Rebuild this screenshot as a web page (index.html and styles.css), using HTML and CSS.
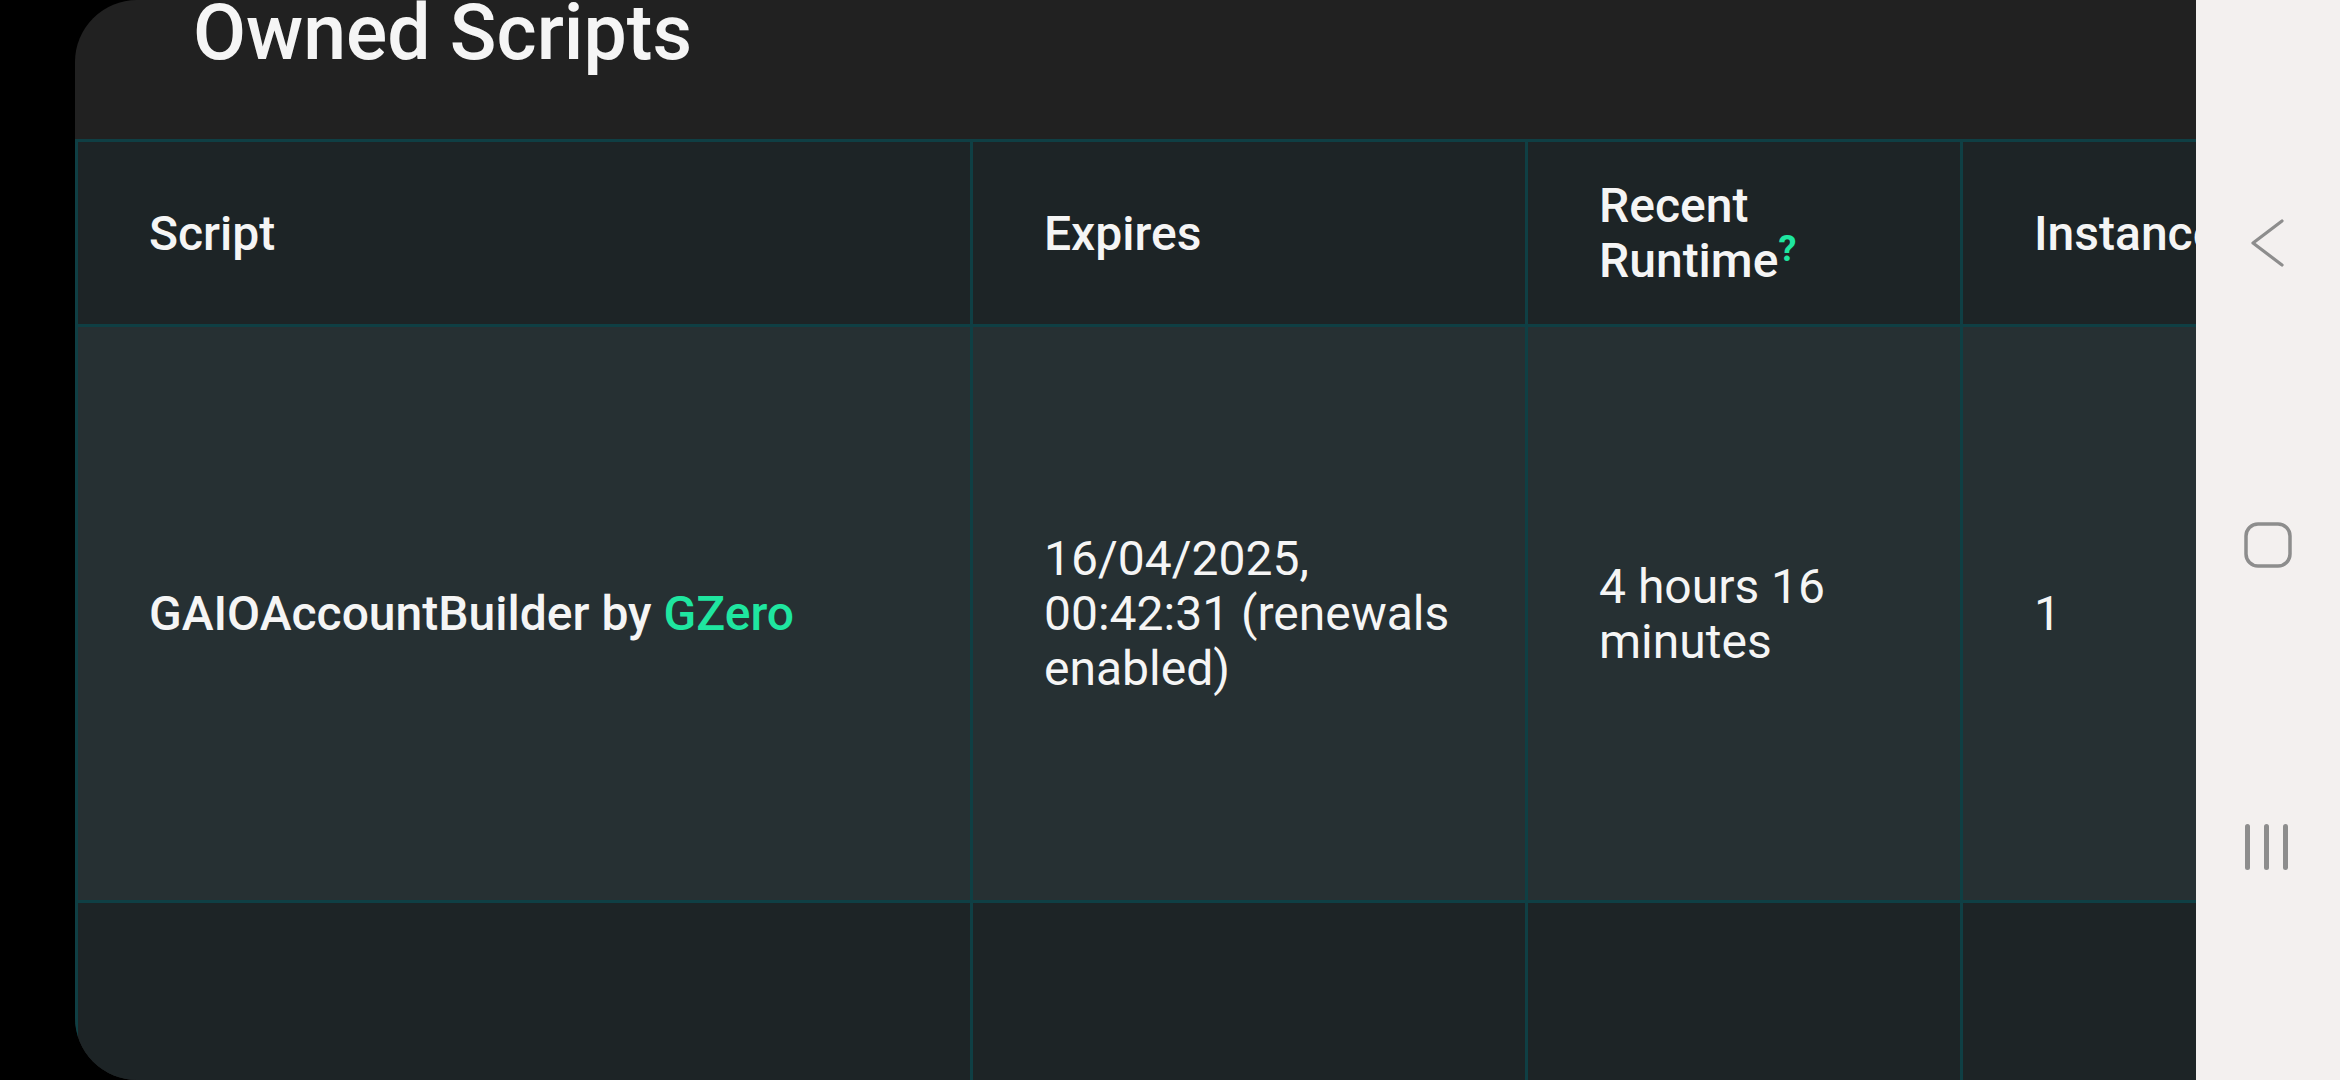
FILE: index.html
```html
<!DOCTYPE html>
<html>
<head>
  <meta charset="UTF-8"/>
  <meta name="viewport" content="width=device-width, initial-scale=1.0"/>
  <title>Owned Scripts</title>
  <link rel="stylesheet" href="styles.css">
</head>
<body>
  <div class="screen">
    <div class="card-head">
      <h2>Owned Scripts</h2>
    </div>
    <table class="scripts">
      <colgroup>
        <col class="c-script">
        <col class="c-expires">
        <col class="c-runtime">
        <col class="c-inst">
        <col class="c-more">
      </colgroup>
      <thead>
        <tr class="head">
          <th>Script</th>
          <th>Expires</th>
          <th>Recent Runtime<span class="hint">?</span></th>
          <th>Instances</th>
          <th>Actions</th>
        </tr>
      </thead>
      <tbody>
        <tr class="row">
          <td class="name">GAIOAccountBuilder by <span class="author">GZero</span></td>
          <td>16/04/2025, 00:42:31 (renewals enabled)</td>
          <td>4 hours 16 minutes</td>
          <td>1</td>
          <td></td>
        </tr>
        <tr class="row next">
          <td></td>
          <td></td>
          <td></td>
          <td></td>
          <td></td>
        </tr>
      </tbody>
    </table>
  </div>
  <div class="navbar">
    <svg class="nav-icon" width="48" height="48" viewBox="0 0 48 48">
      <path d="M38 2 L9 24 L38 46" fill="none" stroke="#8d8d8d" stroke-width="3.2" stroke-linecap="round" stroke-linejoin="round"/>
    </svg>
    <svg class="nav-icon" width="48" height="48" viewBox="0 0 48 48">
      <rect x="2" y="3" width="44" height="42" rx="12" fill="none" stroke="#8d8d8d" stroke-width="3.5"/>
    </svg>
    <svg class="nav-icon" width="48" height="48" viewBox="0 0 48 48">
      <rect x="1" y="1" width="5" height="46" rx="2.5" fill="#8d8d8d"/>
      <rect x="20" y="1" width="5" height="46" rx="2.5" fill="#8d8d8d"/>
      <rect x="39" y="1" width="5" height="46" rx="2.5" fill="#8d8d8d"/>
    </svg>
  </div>
</body>
</html>
```

FILE: styles.css
```css
:root{
  --line: #0f3f44;
  --green: #1fe6a0;
}
html, body{
  height: 100%;
}
body{
  margin: 0;
  display: flex;
  background-color: black;
  color: #f5f5f5;
  font-family: Roboto, "Noto Sans", sans-serif;
  overflow: hidden;
}
.screen{
  flex: 1;
  min-width: 0;
  margin-left: 75px;
  background-color: #212121;
  border-radius: 62px 0 0 62px;
  overflow: hidden;
}
.card-head{
  display: flow-root;
  height: 139px;
}
.card-head h2{
  margin: -12px 0 0 0;
  padding-left: 118px;
  font-size: 77px;
  font-weight: 500;
  line-height: normal;
}
.scripts{
  border-collapse: separate;
  border-spacing: 0;
  table-layout: fixed;
  width: 3088px;
  border-top: 3px solid var(--line);
  border-left: 3px solid var(--line);
  font-size: 48px;
  line-height: 55px;
}
.c-script{width: 895px}
.c-expires{width: 555px}
.c-runtime{width: 435px}
.c-inst{width: 600px}
.c-more{width: 600px}
.scripts th, .scripts td{
  box-sizing: border-box;
  padding: 36px 45px 36px 71px;
  border-right: 3px solid var(--line);
  border-bottom: 3px solid var(--line);
  text-align: left;
  vertical-align: middle;
}
.scripts th{
  font-weight: 500;
  background-color: #1d2426;
}
.head{height: 185px}
.row{height: 576px}
.row td{
  background-color: #263033;
  font-weight: 400;
}
.row.next{height: 200px}
.row.next td{background-color: #1d2426}
.scripts td.name{font-weight: 500}
.author{color: var(--green)}
.hint{
  color: var(--green);
  font-size: 36px;
  font-weight: 700;
  vertical-align: 16px;
  line-height: 0;
}
.navbar{
  width: 144px;
  flex-shrink: 0;
  background-color: #f3f0ef;
  display: flex;
  flex-direction: column;
  align-items: center;
  gap: 254px;
  padding-top: 219px;
  box-sizing: border-box;
}
.nav-icon{display: block}
```
